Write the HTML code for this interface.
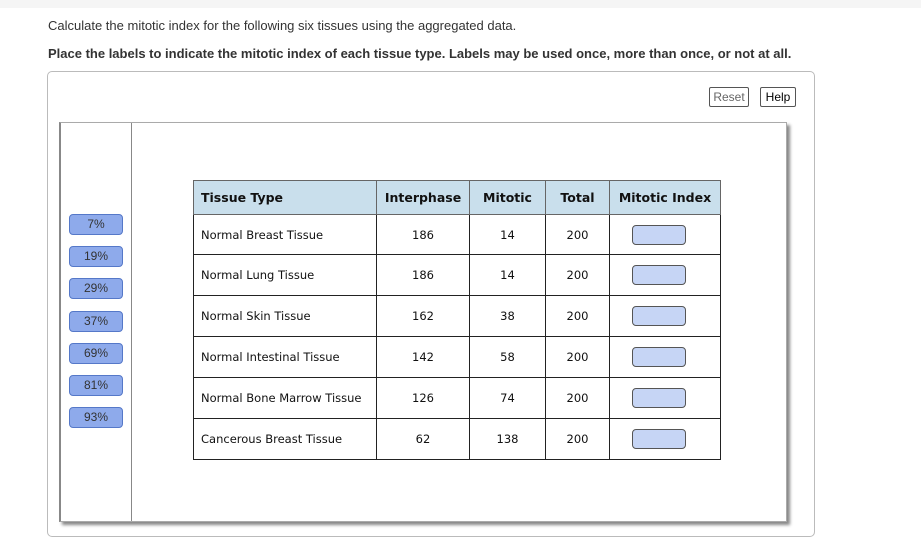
<!DOCTYPE html>
<html><head><style>
body{margin:0;width:921px;height:544px;background:#fff;font-family:"Liberation Sans",sans-serif;position:relative;overflow:hidden}
.top{position:absolute;left:0;top:0;width:921px;height:8px;background:#f5f5f5}
.t1{position:absolute;left:48px;top:18px;font-size:13px;color:#333}
.t2{position:absolute;left:48px;top:46px;font-size:13px;font-weight:bold;color:#333}
.box{position:absolute;left:47px;top:71px;width:766px;height:464px;border:1px solid #bbb;border-radius:5px}
.btn{position:absolute;top:87px;height:18px;border:1px solid #555;border-radius:2px;font-size:12px;line-height:18px;text-align:center;background:#fff}
.panel{position:absolute;left:59px;top:122px;width:725px;height:398px;border:1px solid #aaa;border-left:2px solid #888;box-shadow:3px 3px 3px #888}
.div{position:absolute;left:131px;top:123px;width:1px;height:398px;background:#888}
.lab{position:absolute;left:69px;width:52px;height:19px;background:#8eaaeb;border:1px solid #5578c8;border-radius:4px;font-size:12px;line-height:19px;text-align:center;color:#333}
table{position:absolute;left:193px;top:180px;border-collapse:collapse;font-family:"DejaVu Sans",sans-serif;font-size:11.5px;color:#111}
td,th{border:1px solid #222;padding:0}
th{background:#c9dfec;height:33px;font-size:12.5px;border-color:#666}
th:first-child,td:first-child{text-align:left;padding-left:7px}
td{text-align:center;height:39px}
td.m{text-align:left;padding-left:22px}
.d{display:inline-block;width:52px;height:18px;background:#c6d5f5;border:1px solid #555;border-radius:4px;vertical-align:middle}
</style></head><body>
<div class="top"></div>
<div class="t1">Calculate the mitotic index for the following six tissues using the aggregated data.</div>
<div class="t2">Place the labels to indicate the mitotic index of each tissue type. Labels may be used once, more than once, or not at all.</div>
<div class="box"></div>
<div class="btn" style="left:709px;width:38px;color:#666">Reset</div>
<div class="btn" style="left:760px;width:34px;color:#000">Help</div>
<div class="panel"></div>
<div class="div"></div>
<div class="lab" style="top:214px">7%</div>
<div class="lab" style="top:246px">19%</div>
<div class="lab" style="top:278px">29%</div>
<div class="lab" style="top:311px">37%</div>
<div class="lab" style="top:343px">69%</div>
<div class="lab" style="top:375px">81%</div>
<div class="lab" style="top:407px">93%</div>
<table>
<tr><th style="width:175px">Tissue Type</th><th style="width:92px">Interphase</th><th style="width:75px">Mitotic</th><th style="width:63px">Total</th><th style="width:110px">Mitotic Index</th></tr>
<tr><td>Normal Breast Tissue</td><td>186</td><td>14</td><td>200</td><td class="m"><span class="d"></span></td></tr>
<tr><td style="height:40px">Normal Lung Tissue</td><td>186</td><td>14</td><td>200</td><td class="m"><span class="d"></span></td></tr>
<tr><td style="height:40px">Normal Skin Tissue</td><td>162</td><td>38</td><td>200</td><td class="m"><span class="d"></span></td></tr>
<tr><td style="height:40px">Normal Intestinal Tissue</td><td>142</td><td>58</td><td>200</td><td class="m"><span class="d"></span></td></tr>
<tr><td style="height:40px">Normal Bone Marrow Tissue</td><td>126</td><td>74</td><td>200</td><td class="m"><span class="d"></span></td></tr>
<tr><td style="height:40px">Cancerous Breast Tissue</td><td>62</td><td>138</td><td>200</td><td class="m"><span class="d"></span></td></tr>
</table>
</body></html>
